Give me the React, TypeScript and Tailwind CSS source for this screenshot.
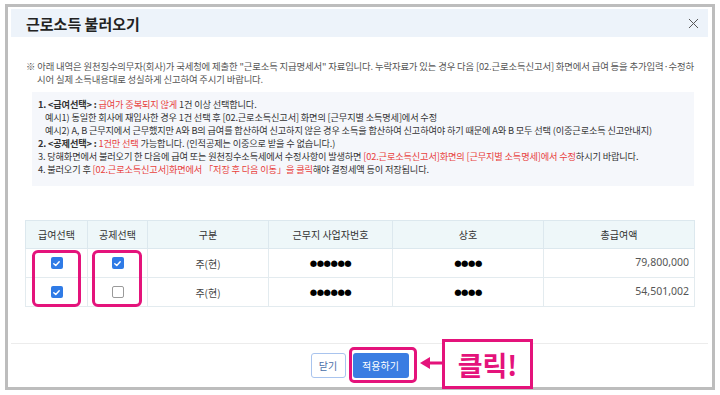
import { X } from 'lucide-react';

const kr = { fontFamily: '"Noto Sans CJK KR", "Noto Sans", sans-serif' };

function Check({ on }: { on: boolean }) {
  if (!on) {
    return <span className="inline-block w-[12px] h-[12px] rounded-[2px] border border-[#9a9a9a] bg-white" />;
  }
  return (
    <span className="inline-flex w-[12px] h-[12px] rounded-[2px] bg-[#2f7be6] items-center justify-center">
      <svg width="9" height="9" viewBox="0 0 10 10">
        <path d="M2 5.2 L4.2 7.2 L8 3" fill="none" stroke="#fff" strokeWidth="1.6" strokeLinecap="round" strokeLinejoin="round" />
      </svg>
    </span>
  );
}

const rows = [
  { pay: true, ded: true, amount: '79,800,000' },
  { pay: true, ded: false, amount: '54,501,002' },
];

export default function App() {
  return (
    <div className="relative w-[720px] h-[395px] bg-white overflow-hidden" style={kr}>
      {/* 바깥 프레임 */}
      <div className="ml-[5px] mt-[4px] w-[710px] h-[386px] border-[3px] border-[#bdbdbd] pt-[2px] pl-[3px] pr-[4px] flex flex-col">
        {/* 헤더 */}
        <div className="h-[28px] bg-[#edf3fa] flex items-center justify-between pl-[15px] pr-[6px] shrink-0">
          <h1 className="text-[15px] font-bold text-[#222] leading-none">근로소득 불러오기</h1>
          <X className="w-[17px] h-[17px] text-[#555]" strokeWidth={1.4} />
        </div>

        {/* 안내문 */}
        <p className="mt-[23px] pl-[26px] -indent-[11px] whitespace-nowrap text-[9.4px] leading-[13px] text-[#555] tracking-[-0.15px]">
          ※ 아래 내역은 원천징수의무자(회사)가 국세청에 제출한 "근로소득 지급명세서" 자료입니다. 누락자료가 있는 경우 다음 [02.근로소득신고서] 화면에서 급여 등을 추가입력·수정하
          <br />
          시어 실제 소득내용대로 성실하게 신고하여 주시기 바랍니다.
        </p>

        <div className="mt-[6px] ml-[21px] mr-[14px] bg-[#f5f7fb] pt-[6px] pb-[10px] pl-[6px] text-[9.2px] leading-[13px] text-[#333] tracking-[-0.15px]">
          <p>
            <b className="font-bold">1. &lt;급여선택&gt; : </b>
            <span className="text-[#e8413d]">급여가 중복되지 않게</span> 1건 이상 선택합니다.
          </p>
          <p className="pl-[7px]">예시1) 동일한 회사에 재입사한 경우 1건 선택 후 [02.근로소득신고서] 화면의 [근무지별 소득명세]에서 수정</p>
          <p className="pl-[7px]">예시2) A, B 근무지에서 근무했지만 A와 B의 급여를 합산하여 신고하지 않은 경우 소득을 합산하여 신고하여야 하기 때문에 A와 B 모두 선택 (이중근로소득 신고안내지)</p>
          <p>
            <b className="font-bold">2. &lt;공제선택&gt; : </b>
            <span className="text-[#e8413d]">1건만 선택</span> 가능합니다. (인적공제는 이중으로 받을 수 없습니다.)
          </p>
          <p>
            3. 당해화면에서 불러오기 한 다음에 급여 또는 원천징수소득세에서 수정사항이 발생하면{' '}
            <span className="text-[#e8413d]">[02.근로소득신고서]화면의 [근무지별 소득명세]에서 수정</span>하시기 바랍니다.
          </p>
          <p>
            4. 불러오기 후 <span className="text-[#e8413d]">[02.근로소득신고서]화면에서 「저장 후 다음 이동」을 클릭</span>해야 결정세액 등이 저장됩니다.
          </p>
        </div>

        {/* 테이블 */}
        <table className="mt-[34px] ml-[14px] w-[669px] border-collapse table-fixed text-[10px] text-[#444]">
          <colgroup>
            <col className="w-[62px]" />
            <col className="w-[60px]" />
            <col className="w-[121px]" />
            <col className="w-[124px]" />
            <col className="w-[151px]" />
            <col className="w-[151px]" />
          </colgroup>
          <thead>
            <tr className="h-[28px] bg-[#eef7f9] text-[#333]">
              {['급여선택', '공제선택', '구분', '근무지 사업자번호', '상호', '총급여액'].map((h) => (
                <th key={h} className="border border-[#dce8ee] font-normal">{h}</th>
              ))}
            </tr>
          </thead>
          <tbody>
            {rows.map((r, i) => (
              <tr key={i} className="h-[29px]">
                <td className="border border-[#e3ebef] text-center align-middle">
                  <div className="flex justify-center"><Check on={r.pay} /></div>
                </td>
                <td className="border border-[#e3ebef] text-center align-middle">
                  <div className="flex justify-center"><Check on={r.ded} /></div>
                </td>
                <td className="border border-[#e3ebef] text-center">주(현)</td>
                <td className="border border-[#e3ebef] text-center text-black text-[8.5px] tracking-[-0.5px]" style={{ fontFamily: '"DejaVu Sans", sans-serif' }}>●●●●●●</td>
                <td className="border border-[#e3ebef] text-center text-black text-[8.5px] tracking-[-0.5px]" style={{ fontFamily: '"DejaVu Sans", sans-serif' }}>●●●●</td>
                <td className="border border-[#e3ebef] text-right pr-[5px] text-[10.5px] text-[#555]" style={{ fontFamily: '"Noto Sans", sans-serif' }}>{r.amount}</td>
              </tr>
            ))}
          </tbody>
        </table>

        <div className="flex-1" />

        {/* 푸터 */}
        <div className="h-[44px] border-t border-[#ececec] flex items-center justify-center gap-[7px] shrink-0">
          <button className="w-[35px] h-[25px] rounded-[3px] border border-[#a9c4ee] bg-white text-[10px] text-[#4a6ea8]">닫기</button>
          <button className="w-[56px] h-[25px] rounded-[3px] bg-[#3a7de2] text-[10px] text-white">적용하기</button>
        </div>
      </div>

      {/* 강조 표시 */}
      <div className="absolute left-[32px] top-[250px] w-[49px] h-[57px] border-[3px] border-[#e4137b] rounded-[6px]" />
      <div className="absolute left-[92px] top-[250px] w-[50px] h-[57px] border-[3px] border-[#e4137b] rounded-[6px]" />
      <div className="absolute left-[349px] top-[347px] w-[68px] h-[36px] border-[3px] border-[#e4137b] rounded-[5px]" />
      <svg className="absolute left-[418px] top-[355px]" width="26" height="16" viewBox="0 0 26 16">
        <path d="M2 8 L12 2 L12 14 Z" fill="#e4137b" />
        <rect x="10" y="6.5" width="16" height="3" fill="#e4137b" />
      </svg>
      <div className="absolute left-[442px] top-[339px] w-[91px] h-[50px] border-[3px] border-[#e4137b] bg-white flex items-center justify-center">
        <span className="text-[27px] font-bold text-[#e4137b] leading-none">클릭!</span>
      </div>
    </div>
  );
}
